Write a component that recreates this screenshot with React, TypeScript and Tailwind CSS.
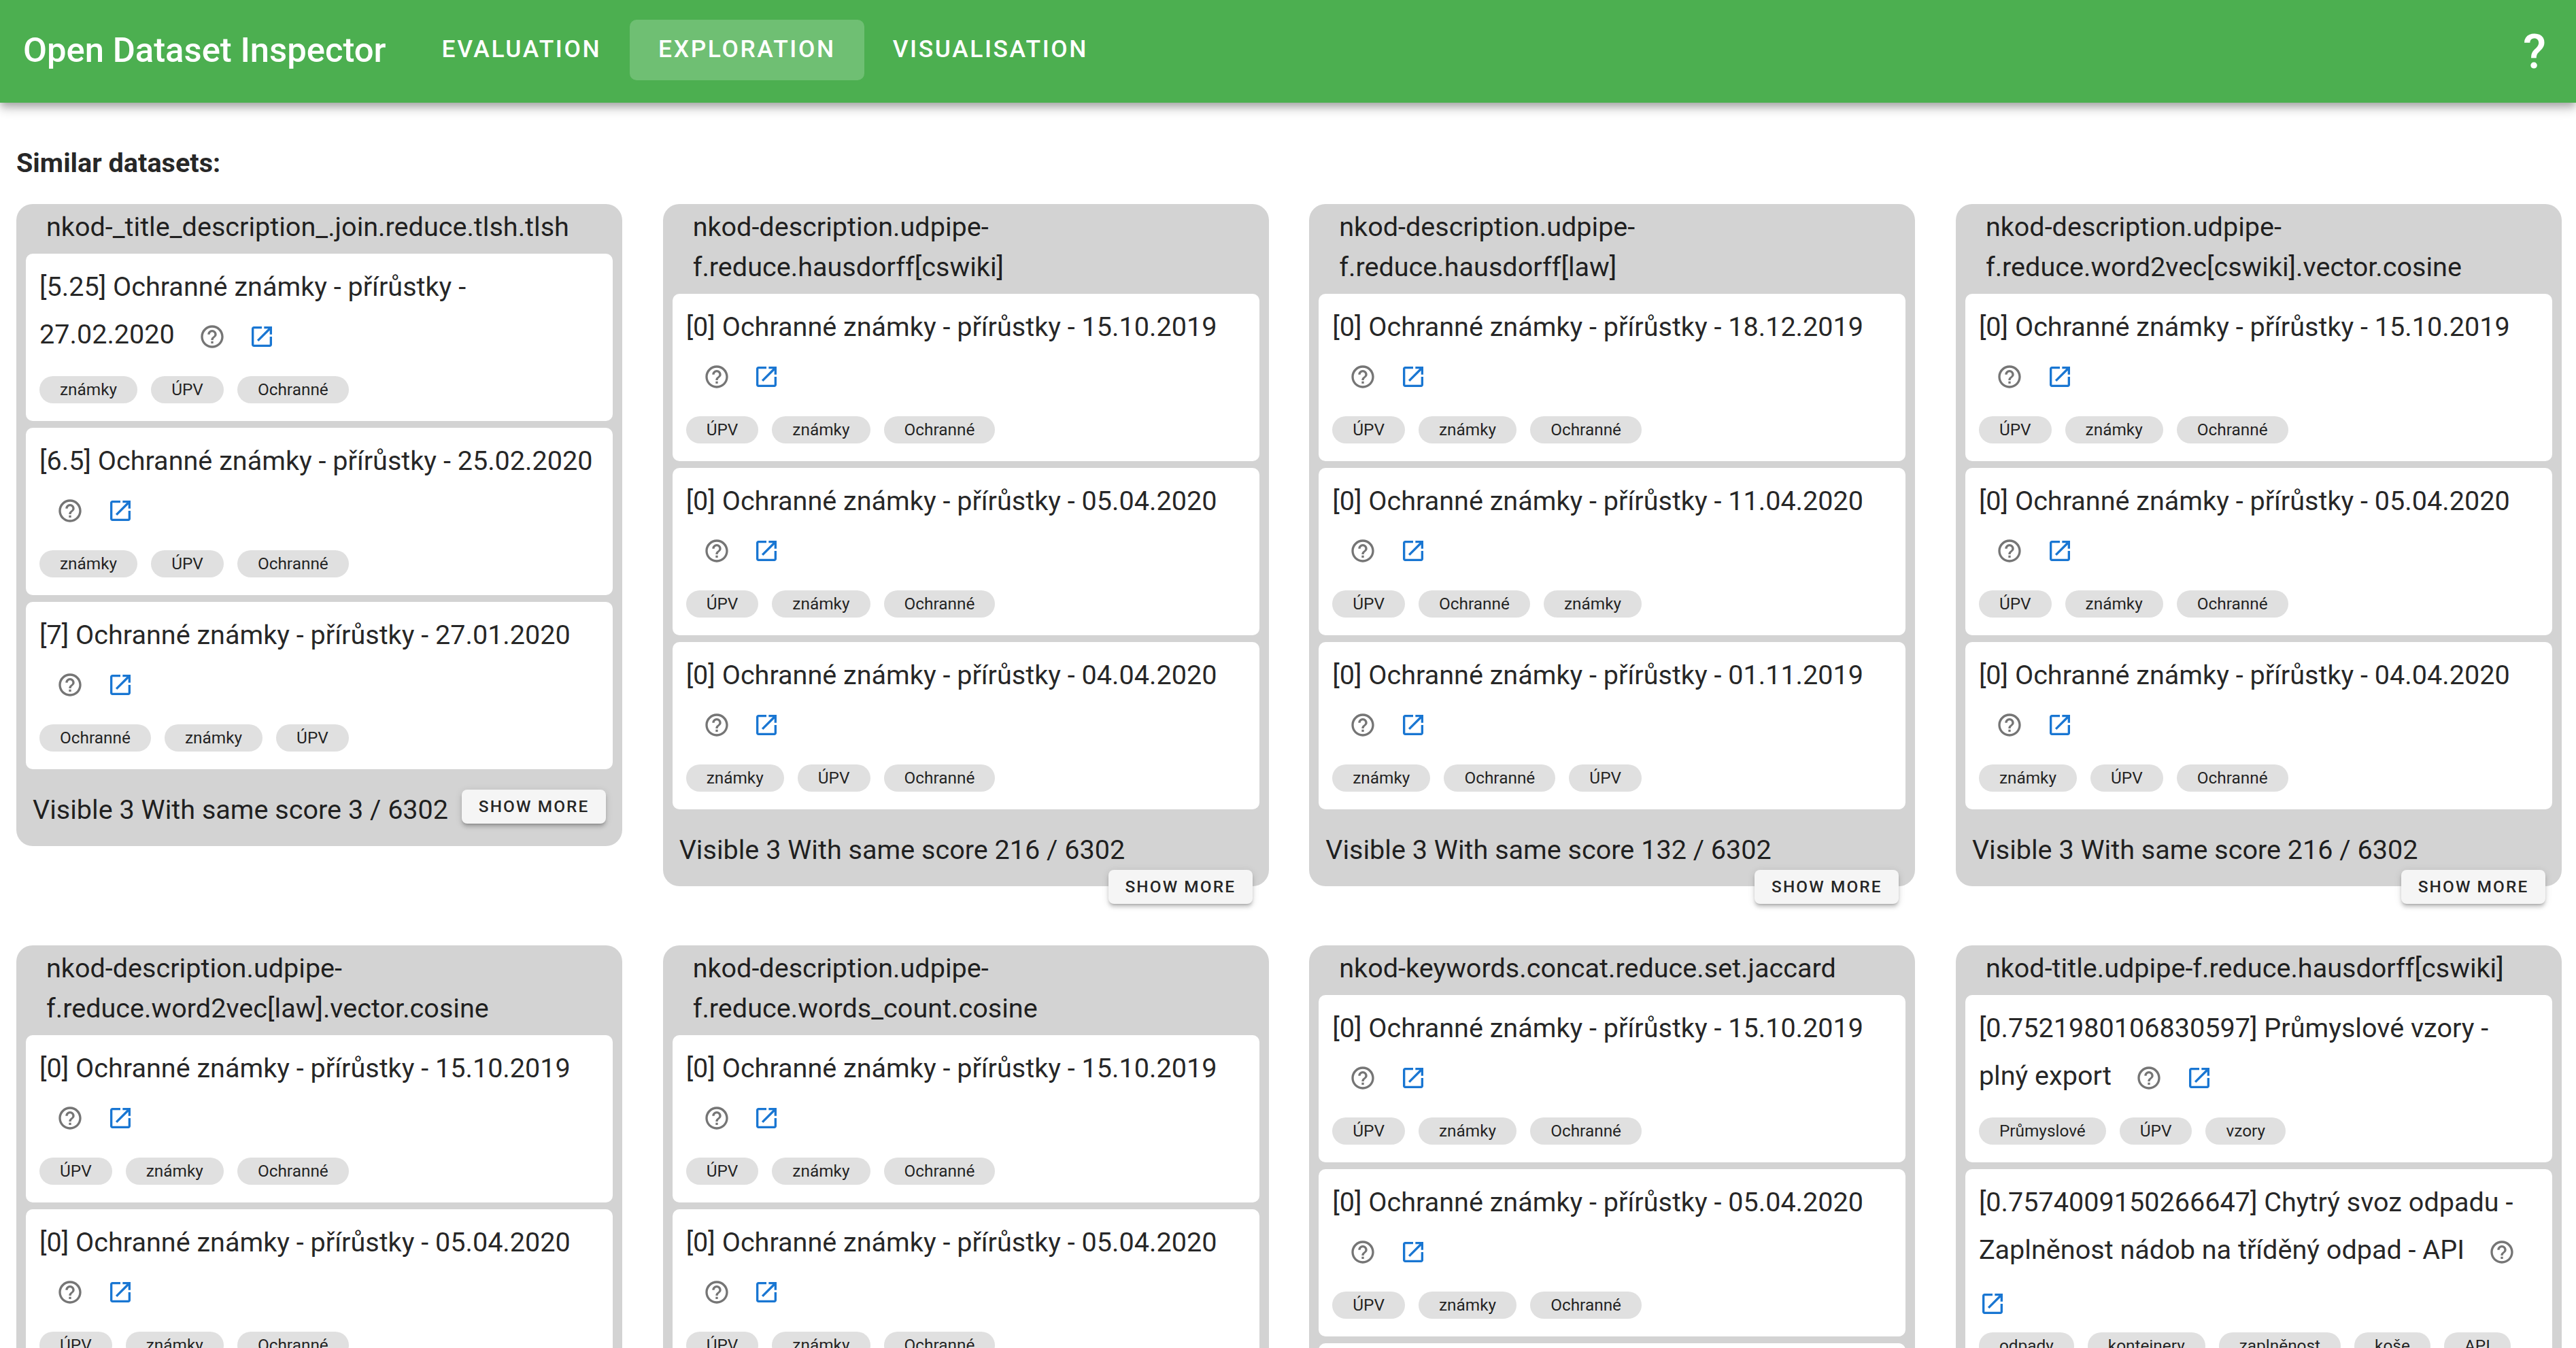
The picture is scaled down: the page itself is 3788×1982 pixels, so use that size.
import React from "react";

type Item = { text: string; chips: string[]; tight?: boolean };
type Group = { title: string; items: Item[]; footer: string };

const P = "Ochranné známky - přírůstky - ";
const A = ["ÚPV", "známky", "Ochranné"];
const B = ["známky", "ÚPV", "Ochranné"];

const groups: Group[] = [
  {
    title: "nkod-_title_description_.join.reduce.tlsh.tlsh",
    footer: "Visible 3 With same score 3 / 6302",
    items: [
      { text: "[5.25] " + P + "27.02.2020", chips: B },
      { text: "[6.5] " + P + "25.02.2020", chips: B },
      { text: "[7] " + P + "27.01.2020", chips: ["Ochranné", "známky", "ÚPV"] },
    ],
  },
  {
    title: "nkod-description.udpipe-f.reduce.hausdorff[cswiki]",
    footer: "Visible 3 With same score 216 / 6302",
    items: [
      { text: "[0] " + P + "15.10.2019", chips: A },
      { text: "[0] " + P + "05.04.2020", chips: A },
      { text: "[0] " + P + "04.04.2020", chips: B },
    ],
  },
  {
    title: "nkod-description.udpipe-f.reduce.hausdorff[law]",
    footer: "Visible 3 With same score 132 / 6302",
    items: [
      { text: "[0] " + P + "18.12.2019", chips: A },
      { text: "[0] " + P + "11.04.2020", chips: ["ÚPV", "Ochranné", "známky"] },
      { text: "[0] " + P + "01.11.2019", chips: ["známky", "Ochranné", "ÚPV"] },
    ],
  },
  {
    title: "nkod-description.udpipe-f.reduce.word2vec[cswiki].vector.cosine",
    footer: "Visible 3 With same score 216 / 6302",
    items: [
      { text: "[0] " + P + "15.10.2019", chips: A },
      { text: "[0] " + P + "05.04.2020", chips: A },
      { text: "[0] " + P + "04.04.2020", chips: B },
    ],
  },
  {
    title: "nkod-description.udpipe-f.reduce.word2vec[law].vector.cosine",
    footer: "Visible 3 With same score 216 / 6302",
    items: [
      { text: "[0] " + P + "15.10.2019", chips: A },
      { text: "[0] " + P + "05.04.2020", chips: A },
      { text: "[0] " + P + "04.04.2020", chips: B },
    ],
  },
  {
    title: "nkod-description.udpipe-f.reduce.words_count.cosine",
    footer: "Visible 3 With same score 216 / 6302",
    items: [
      { text: "[0] " + P + "15.10.2019", chips: A },
      { text: "[0] " + P + "05.04.2020", chips: A },
      { text: "[0] " + P + "04.04.2020", chips: B },
    ],
  },
  {
    title: "nkod-keywords.concat.reduce.set.jaccard",
    footer: "Visible 3 With same score 216 / 6302",
    items: [
      { text: "[0] " + P + "15.10.2019", chips: A },
      { text: "[0] " + P + "05.04.2020", chips: A },
      { text: "[0] " + P + "04.04.2020", chips: B },
    ],
  },
  {
    title: "nkod-title.udpipe-f.reduce.hausdorff[cswiki]",
    footer: "Visible 3 With same score 3 / 6302",
    items: [
      { text: "[0.7521980106830597] Průmyslové vzory - plný export", chips: ["Průmyslové", "ÚPV", "vzory"] },
      {
        text: "[0.7574009150266647] Chytrý svoz odpadu - Zaplněnost nádob na tříděný odpad - API",
        chips: ["odpady", "kontejnery", "zaplněnost", "koše", "API"],
        tight: true,
      },
    ],
  },
];

function HelpIcon() {
  return (
    <svg viewBox="0 0 24 24" className="inline-block w-[40px] h-[40px] align-middle ml-[25px] mr-[24px] fill-[#757575]">
      <path d="M11 18h2v-2h-2v2zm1-16C6.48 2 2 6.48 2 12s4.48 10 10 10 10-4.48 10-10S17.52 2 12 2zm0 18c-4.41 0-8-3.59-8-8s3.59-8 8-8 8 3.59 8 8-3.59 8-8 8zm0-14c-2.21 0-4 1.79-4 4h2c0-1.1.9-2 2-2s2 .9 2 2c0 2-3 1.75-3 5h2c0-2.25 3-2.5 3-5 0-2.21-1.79-4-4-4z" />
    </svg>
  );
}

function OpenIcon({ tight }: { tight?: boolean }) {
  return (
    <svg
      viewBox="0 0 24 24"
      className={tight ? "relative top-[6px] inline-block w-[40px] h-[40px] align-middle fill-[#1976d2]" : "inline-block w-[40px] h-[40px] align-middle fill-[#1976d2]"}
    >
      <path d="M19 19H5V5h7V3H5c-1.11 0-2 .9-2 2v14c0 1.1.89 2 2 2h14c1.1 0 2-.9 2-2v-7h-2v7zM14 3v2h3.59l-9.83 9.83 1.41 1.41L19 6.41V10h2V3h-7z" />
    </svg>
  );
}

function Chip({ label }: { label: string }) {
  return (
    <span className="flex items-center h-[40px] px-[30px] rounded-[20px] bg-[#e0e0e0] text-[24.4px] leading-[40px] text-[#000000de] whitespace-nowrap">
      {label}
    </span>
  );
}

function ItemCard({ item }: { item: Item }) {
  return (
    <div className="bg-white rounded-[10px] px-[20px] pt-[14px] pb-[26px]">
      <div className="text-[39.6px] leading-[70px] min-h-[140px]">
        {item.text} <HelpIcon /> <OpenIcon tight={item.tight} />
      </div>
      <div className={item.tight ? "flex flex-wrap gap-[20px] mt-[16px]" : "flex flex-wrap gap-[20px] mt-[26px]"}>
        {item.chips.map((c, i) => (
          <Chip key={i} label={c} />
        ))}
      </div>
    </div>
  );
}

function GroupCard({ group }: { group: Group }) {
  return (
    <div className="self-start bg-[#d3d3d3] rounded-[24px] text-[#000000de]">
      <div className="px-[44px] pt-[4px] text-[39.6px] leading-[59px]">{group.title}</div>
      <div className="flex flex-col gap-[10px] px-[14px] pt-[10px]">
        {group.items.map((it, i) => (
          <ItemCard key={i} item={it} />
        ))}
      </div>
      <div className="flex flex-wrap justify-between content-start h-[59px] mx-[24px] mt-[30px] mb-[24px]">
        <span className="text-[39.6px] leading-[59px]">{group.footer}</span>
        <button className="ml-auto w-[212px] h-[50px] rounded-[8px] bg-[#f5f5f5] text-[24.4px] font-medium tracking-[2.1px] text-[#000000de] uppercase shadow-[0_3px_3px_-2px_rgba(0,0,0,.2),0_5px_5px_0_rgba(0,0,0,.14),0_2px_12px_0_rgba(0,0,0,.12)]">
          Show more
        </button>
      </div>
    </div>
  );
}

export default function App() {
  return (
    <div className="h-[1982px] overflow-hidden bg-white [font-family:Roboto,sans-serif]">
      <header className="relative z-10 flex items-center h-[151px] pl-[34px] pr-[44px] bg-[#4caf50] text-white shadow-[0_5px_10px_-2px_rgba(0,0,0,.2),0_10px_12px_0_rgba(0,0,0,.14),0_2px_24px_0_rgba(0,0,0,.12)]">
        <div className="text-[50.8px] leading-[60px] font-medium mr-[40px] whitespace-nowrap -mt-[3px]">Open Dataset Inspector</div>
        <nav className="flex -mt-[5px]">
          <div className="flex items-center h-[89px] px-[42px] rounded-[10px] text-[35.4px] font-medium tracking-[2.6px]">EVALUATION</div>
          <div className="flex items-center h-[89px] px-[42px] rounded-[10px] bg-[#ffffff33] text-[35.4px] font-medium tracking-[2.6px]">EXPLORATION</div>
          <div className="flex items-center h-[89px] px-[42px] rounded-[10px] text-[35.4px] font-medium tracking-[2.6px]">VISUALISATION</div>
        </nav>
        <div className="ml-auto text-[70px] leading-none font-medium">?</div>
      </header>
      <main className="pl-[24px] pr-[21px] pt-[59px]">
        <div className="text-[39.6px] leading-[59px] font-bold text-[#000000de] mb-[31px]">Similar datasets:</div>
        <div className="grid grid-cols-4 gap-x-[59.5px] gap-y-[87px]">
          {groups.map((g, i) => (
            <GroupCard key={i} group={g} />
          ))}
        </div>
      </main>
    </div>
  );
}
